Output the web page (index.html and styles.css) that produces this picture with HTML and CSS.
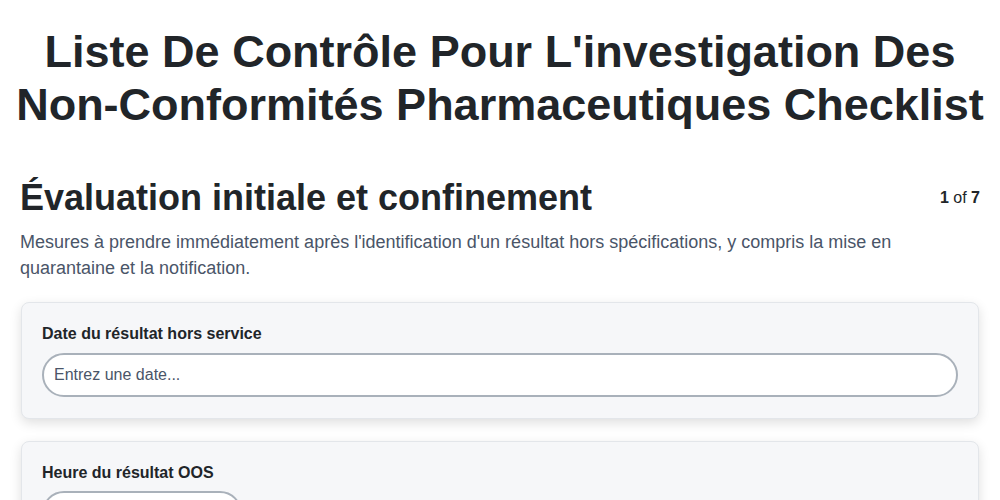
FILE: index.html
```html
<!DOCTYPE html>
<html lang="fr">
<head>
  <meta charset="UTF-8" />
  <meta name="viewport" content="width=device-width, initial-scale=1.0"/>
  <title>Liste De Contrôle</title>
  <link rel="stylesheet" href="styles.css">
</head>
<body>
  <h1 class="titre">Liste De Contrôle Pour L'investigation Des Non-Conformités Pharmaceutiques Checklist</h1>

  <div class="section">
    <div class="section-entete">
      <h2>Évaluation initiale et confinement</h2>
      <span class="etape"><b>1</b> of <b>7</b></span>
    </div>
    <p class="description">Mesures à prendre immédiatement après l'identification d'un résultat hors spécifications, y compris la mise en quarantaine et la notification.</p>

    <div class="carte">
      <label for="date-oos">Date du résultat hors service</label>
      <input id="date-oos" class="champ" type="text" placeholder="Entrez une date...">
    </div>

    <div class="carte">
      <label for="heure-oos">Heure du résultat OOS</label>
      <input id="heure-oos" class="champ champ-court" type="text">
    </div>
  </div>
</body>
</html>
```

FILE: styles.css
```css
* {
  box-sizing: border-box;
  margin: 0;
  padding: 0;
  font-family: "Liberation Sans", Arial, sans-serif;
}

body {
  background: #fff;
  color: #212529;
  padding: 25px 20px 20px 20px;
}

.titre {
  font-size: 45px;
  line-height: 1.18;
  text-align: center;
  font-weight: bold;
  margin: 0 -12px;
}

.section {
  margin-top: 45px;
}

.section-entete {
  display: flex;
  justify-content: space-between;
  align-items: center;
}

.section-entete h2 {
  font-size: 36px;
  line-height: 1.2;
  font-weight: bold;
}

.etape {
  font-size: 16px;
  color: #212529;
}

.description {
  font-size: 18px;
  line-height: 26px;
  color: #4a5568;
  margin-top: 10px;
  margin-bottom: 21px;
}

.carte {
  display: flex;
  flex-direction: column;
  align-items: flex-start;
  background: #f6f7f9;
  border: 1px solid #e3e6ea;
  border-radius: 8px;
  padding: 21px 20px 21px 20px;
  margin-bottom: 22px;
  margin-left: 1px;
  margin-right: 1px;
  box-shadow: 0 4px 12px rgba(0, 0, 0, 0.13);
}

.carte label {
  font-size: 16px;
  font-weight: bold;
  line-height: 1.2;
  color: #212529;
  margin-bottom: 9px;
}

.champ {
  width: 100%;
  font-size: 16px;
  padding: 11px 10px;
  border: 2px solid #a9b1ba;
  border-radius: 22px;
  background: #fff;
  color: #212529;
  outline: none;
}

.champ::placeholder {
  color: #4a5568;
}

.champ-court {
  width: 200px;
}
```
